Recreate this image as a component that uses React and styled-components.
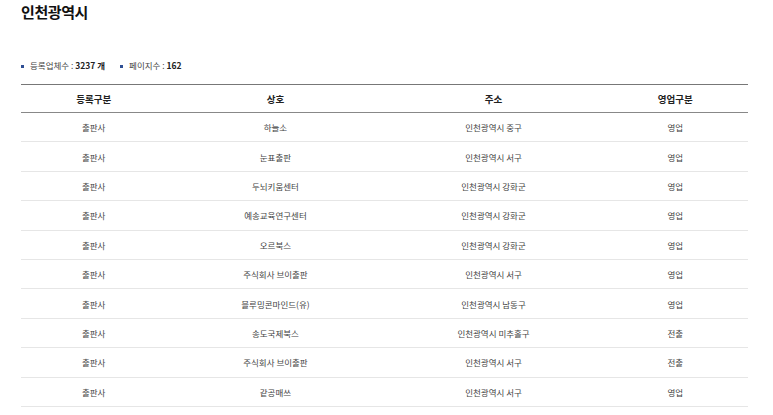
import React from "react";
import styled, { createGlobalStyle } from "styled-components";

const GlobalStyle = createGlobalStyle`
  html, body {
    margin: 0;
    padding: 0;
    background: #fff;
  }
  body {
    font-family: "Noto Sans CJK KR", "Noto Sans", sans-serif;
    color: #333;
  }
`;

const Page = styled.div`
  padding: 1px 25px 0 21px;
`;

const Title = styled.h2`
  margin: 0;
  font-size: 15px;
  font-weight: 700;
  letter-spacing: -0.4px;
  color: #111;
  line-height: 22px;
`;

const Summary = styled.ul`
  display: flex;
  gap: 15px;
  list-style: none;
  margin: 35px 0 0;
  padding: 0;
  font-size: 8.5px;
  color: #444;
  line-height: 14px;
`;

const SummaryItem = styled.li`
  &::before {
    content: "";
    display: inline-block;
    width: 3px;
    height: 3px;
    background: #2f4f94;
    margin-right: 6px;
    vertical-align: middle;
  }
  b {
    font-weight: 700;
    color: #222;
  }
`;

const Table = styled.table`
  width: 727px;
  margin-top: 12px;
  border-collapse: collapse;
  border-top: 1.5px solid #777;
  table-layout: fixed;
  font-size: 8.5px;
`;

const Th = styled.th`
  width: ${(p) => p.$w};
  height: 27px;
  padding: 0;
  font-weight: 700;
  font-size: 9.5px;
  color: #222;
  text-align: center;
  border-bottom: 1px solid #888;
`;

const Td = styled.td`
  height: 28.4px;
  padding: 0;
  text-align: center;
  color: #444;
  border-bottom: 1px solid #e6e6e6;
`;

const rows = [
  ["출판사", "하늘소", "인천광역시 중구", "영업"],
  ["출판사", "눈표출판", "인천광역시 서구", "영업"],
  ["출판사", "두뇌키움센터", "인천광역시 강화군", "영업"],
  ["출판사", "예송교육연구센터", "인천광역시 강화군", "영업"],
  ["출판사", "오르북스", "인천광역시 강화군", "영업"],
  ["출판사", "주식회사 브이출판", "인천광역시 서구", "영업"],
  ["출판사", "블루밍콘마인드(유)", "인천광역시 남동구", "영업"],
  ["출판사", "송도국제북스", "인천광역시 미추홀구", "전출"],
  ["출판사", "주식회사 브이출판", "인천광역시 서구", "전출"],
  ["출판사", "같공매쓰", "인천광역시 서구", "영업"],
];

export default function App() {
  return (
    <>
      <GlobalStyle />
      <Page>
        <Title>인천광역시</Title>
        <Summary>
          <SummaryItem>
            등록업체수 : <b>3237 개</b>
          </SummaryItem>
          <SummaryItem>
            페이지수 : <b>162</b>
          </SummaryItem>
        </Summary>
        <Table>
          <thead>
            <tr>
              <Th $w="20%">등록구분</Th>
              <Th $w="30%">상호</Th>
              <Th $w="30%">주소</Th>
              <Th $w="20%">영업구분</Th>
            </tr>
          </thead>
          <tbody>
            {rows.map((r, i) => (
              <tr key={i}>
                {r.map((c, j) => (
                  <Td key={j}>{c}</Td>
                ))}
              </tr>
            ))}
          </tbody>
        </Table>
      </Page>
    </>
  );
}
